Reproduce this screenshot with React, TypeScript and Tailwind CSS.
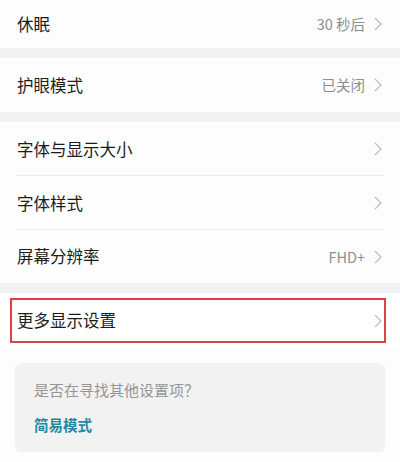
import React from 'react'

const font = { fontFamily: '"Noto Sans CJK SC", "Noto Sans", sans-serif' }

function Chevron() {
  return (
    <svg width="8" height="14" viewBox="0 0 8 14" className="shrink-0">
      <path d="M1 1 L7 7 L1 13" fill="none" stroke="#bdbdbd" strokeWidth="1.3" />
    </svg>
  )
}

function Row({ label, value, divider, h = 'h-[54px]' }: { label: string; value?: string; divider?: boolean; h?: string }) {
  return (
    <div className={`flex items-center justify-between ${h} pl-[17px] pr-[18px] relative`}>
      <span className="text-[16.5px] text-[#1c1c1c]">{label}</span>
      <div className="flex items-center gap-[9px]">
        {value && <span className="text-[14.5px] text-[#8e8e8e]">{value}</span>}
        <Chevron />
      </div>
      {divider && <div className="absolute bottom-0 left-4 right-4 h-px bg-[#ececec]" />}
    </div>
  )
}

function Band() {
  return <div className="h-[10px] bg-[#f2f2f2]" />
}

export default function App() {
  return (
    <div className="w-[400px] h-[462px] bg-[#fdfdfd] overflow-hidden" style={font}>
      <Row label="休眠" value="30 秒后" h="h-[48px]" />
      <Band />
      <Row label="护眼模式" value="已关闭" />
      <Band />
      <Row label="字体与显示大小" divider />
      <Row label="字体样式" divider />
      <Row label="屏幕分辨率" value="FHD+" h="h-[53px]" />
      <Band />
      <div className="pt-[5px] pb-[4px] pl-[10px] pr-[14px] bg-white">
        <div className="flex items-center justify-between h-[45px] border-2 border-[#d9424c] pl-[5px] pr-[2px]">
          <span className="text-[16.5px] text-[#1c1c1c]">更多显示设置</span>
          <Chevron />
        </div>
      </div>
      <div className="px-[15px] pt-[16px]">
        <div className="rounded-md bg-[#f2f2f2] h-[89px] pl-[19px] pt-[14px]">
          <div className="text-[15px] text-[#959595] leading-[26px]">是否在寻找其他设置项？</div>
          <div className="text-[14.5px] font-bold text-[#2289a5] leading-[26px] mt-[9px]">简易模式</div>
        </div>
      </div>
    </div>
  )
}
